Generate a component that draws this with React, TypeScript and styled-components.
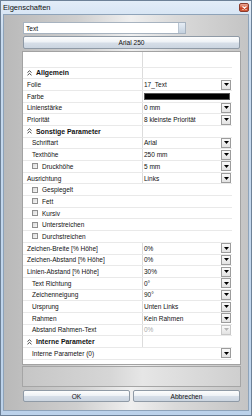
import styled, { createGlobalStyle } from "styled-components";

const Global = createGlobalStyle`
  html, body {
    margin: 0;
    padding: 0;
    background: #fff;
  }
  body {
    font-family: "Liberation Sans", Arial, sans-serif;
    color: #111;
  }
`;

const Window = styled.div`
  width: 252px;
  height: 416px;
  box-sizing: border-box;
  border: 1px solid #6d8197;
  background: linear-gradient(180deg, #e3edf8 0%, #c7daee 8%, #bcd2ea 100%);
  display: flex;
  flex-direction: column;
`;

const TitleBar = styled.div`
  height: 13px;
  display: flex;
  align-items: center;
  justify-content: space-between;
  padding: 0 2px 0 2px;
  font-size: 7.5px;
`;

const CloseButton = styled.div`
  width: 10px;
  height: 9px;
  box-sizing: border-box;
  border: 1px solid #8b3b2c;
  border-radius: 2px;
  background: linear-gradient(180deg, #eaa895 0%, #d9694d 45%, #c43e1e 55%, #d4603f 100%);
  display: flex;
  align-items: center;
  justify-content: center;
`;

const Client = styled.div`
  flex: 1;
  margin: 0 2px 4px;
  border: 1px solid #8ea3b9;
  background: linear-gradient(90deg, #b9b9b9 0%, #cfcfcf 30%, #efefef 52%, #dadada 70%, #c4c4c4 100%);
  padding: 7px 6px 0 18px;
  display: flex;
  flex-direction: column;
`;

const Combo = styled.div`
  width: 163px;
  height: 12px;
  margin-left: 1px;
  box-sizing: border-box;
  border: 1px solid #a7b3c0;
  background: #fff;
  display: flex;
  align-items: center;
  justify-content: space-between;
  font-size: 6.6px;
  padding-left: 2px;
`;

const ComboArrow = styled.div`
  width: 6px;
  height: 10px;
  background: linear-gradient(180deg, #e6edf5, #c4d1df);
  border-left: 1px solid #b8c4d1;
`;

const PushButton = styled.div<{ $width: number }>`
  width: ${(p) => p.$width}px;
  height: 12px;
  box-sizing: border-box;
  border: 1px solid #8f9aa6;
  border-radius: 2px;
  background: linear-gradient(180deg, #fdfdfd 0%, #eef2f6 45%, #d6dee8 55%, #cbd5e0 100%);
  font-size: 6.6px;
  display: flex;
  align-items: center;
  justify-content: center;
`;

const WideButton = styled(PushButton)`
  margin: 2px 0 0 1px;
  height: 13px;
`;

const Grid = styled.div`
  margin-top: 2px;
  width: 219px;
  height: 314px;
  box-sizing: border-box;
  border: 1px solid #a2a2a2;
  background: #fff;
  overflow: hidden;
  display: flex;
  flex-direction: column;
`;

const Row = styled.div<{ $first?: boolean }>`
  height: ${(p) => (p.$first ? 15.5 : 11.7)}px;
  flex: none;
  width: 209px;
  box-sizing: border-box;
  border-bottom: 1px solid #e9e9e9;
  display: flex;
  font-size: 6.5px;
`;

const NameCell = styled.div<{ $indent: number }>`
  width: 120px;
  box-sizing: border-box;
  border-right: 1px solid #dcdcdc;
  padding-left: ${(p) => p.$indent}px;
  display: flex;
  align-items: center;
  gap: 4px;
  white-space: nowrap;
`;

const FullCell = styled.div<{ $indent: number }>`
  flex: 1;
  padding-left: ${(p) => p.$indent}px;
  display: flex;
  align-items: center;
  gap: 4px;
  white-space: nowrap;
`;

const ValueCell = styled.div<{ $disabled?: boolean }>`
  flex: 1;
  padding-left: 1px;
  display: flex;
  align-items: center;
  justify-content: space-between;
  color: ${(p) => (p.$disabled ? "#a8a8a8" : "inherit")};
`;

const CategoryLabel = styled.span`
  font-weight: bold;
  font-size: 6.9px;
`;

const Drop = styled.div<{ $disabled?: boolean }>`
  width: 10px;
  height: 10px;
  margin-right: 1px;
  box-sizing: border-box;
  border: 1px solid ${(p) => (p.$disabled ? "#c8c8c8" : "#9c9c9c")};
  background: linear-gradient(180deg, #fafafa, #e2e2e2);
  display: flex;
  align-items: center;
  justify-content: center;
`;

const CheckBox = styled.span`
  width: 6px;
  height: 6px;
  box-sizing: border-box;
  border: 1px solid #8f8f8f;
  background: linear-gradient(135deg, #d9d9d9, #f7f7f7);
  flex: none;
`;

const Swatch = styled.div`
  width: 86px;
  height: 7px;
  box-sizing: border-box;
  border: 1px solid #555;
  background: #000;
`;

const Description = styled.div`
  margin-top: 1px;
  width: 219px;
  height: 21px;
  box-sizing: border-box;
  border: 1px solid #a5a5a5;
  background: linear-gradient(90deg, #c6c6c6 0%, #d6d6d6 40%, #e6e6e6 55%, #cfcfcf 100%);
`;

const ButtonRow = styled.div`
  margin: 3px 0 0 1px;
  display: flex;
  gap: 3px;
`;

type Item =
  | { kind: "cat"; label: string; indent: number }
  | { kind: "prop"; label: string; value?: string; indent: number; check?: boolean; drop?: boolean; disabled?: boolean; swatch?: boolean }
  | { kind: "check"; label: string }
  | { kind: "full"; label: string; indent: number };

const items: Item[] = [
  { kind: "cat", label: "Allgemein", indent: 4 },
  { kind: "prop", label: "Folie", value: "17_Text", indent: 4, drop: true },
  { kind: "prop", label: "Farbe", indent: 4, swatch: true },
  { kind: "prop", label: "Linienstärke", value: "0 mm", indent: 4, drop: true },
  { kind: "prop", label: "Priorität", value: "8 kleinste Priorität", indent: 4, drop: true },
  { kind: "cat", label: "Sonstige Parameter", indent: 4 },
  { kind: "prop", label: "Schriftart", value: "Arial", indent: 9, drop: true },
  { kind: "prop", label: "Texthöhe", value: "250 mm", indent: 9, drop: true },
  { kind: "prop", label: "Druckhöhe", value: "5 mm", indent: 9, drop: true, check: true },
  { kind: "prop", label: "Ausrichtung", value: "Links", indent: 4, drop: true },
  { kind: "check", label: "Gespiegelt" },
  { kind: "check", label: "Fett" },
  { kind: "check", label: "Kursiv" },
  { kind: "check", label: "Unterstreichen" },
  { kind: "check", label: "Durchstreichen" },
  { kind: "prop", label: "Zeichen-Breite [% Höhe]", value: "0%", indent: 4, drop: true },
  { kind: "prop", label: "Zeichen-Abstand [% Höhe]", value: "0%", indent: 4, drop: true },
  { kind: "prop", label: "Linien-Abstand [% Höhe]", value: "30%", indent: 4, drop: true },
  { kind: "prop", label: "Text Richtung", value: "0°", indent: 9, drop: true },
  { kind: "prop", label: "Zeichenneigung", value: "90°", indent: 9, drop: true },
  { kind: "prop", label: "Ursprung", value: "Unten Links", indent: 9, drop: true },
  { kind: "prop", label: "Rahmen", value: "Kein Rahmen", indent: 9, drop: true },
  { kind: "prop", label: "Abstand Rahmen-Text", value: "0%", indent: 9, drop: true, disabled: true },
  { kind: "cat", label: "Interne Parameter", indent: 4 },
  { kind: "full", label: "Interne Parameter (0)", indent: 9 },
];

function Arrow({ color = "#000" }: { color?: string }) {
  return (
    <svg width="5" height="3" viewBox="0 0 5 3">
      <path d="M0 0h5L2.5 3z" fill={color} />
    </svg>
  );
}

function Collapse() {
  return (
    <svg width="5" height="6" viewBox="0 0 5 6">
      <path d="M0.5 2.5L2.5 0.8 4.5 2.5M0.5 5.2L2.5 3.5 4.5 5.2" fill="none" stroke="#333" strokeWidth="0.9" />
    </svg>
  );
}

function GridRow({ item }: { item: Item }) {
  if (item.kind === "cat") {
    return (
      <Row>
        <NameCell $indent={item.indent}>
          <Collapse />
          <CategoryLabel>{item.label}</CategoryLabel>
        </NameCell>
        <ValueCell />
      </Row>
    );
  }
  if (item.kind === "check") {
    return (
      <Row>
        <FullCell $indent={9}>
          <CheckBox />
          {item.label}
        </FullCell>
      </Row>
    );
  }
  if (item.kind === "full") {
    return (
      <Row>
        <FullCell $indent={item.indent} style={{ justifyContent: "space-between" }}>
          {item.label}
          <Drop>
            <Arrow />
          </Drop>
        </FullCell>
      </Row>
    );
  }
  return (
    <Row>
      <NameCell $indent={item.indent}>
        {item.check && <CheckBox />}
        {item.label}
      </NameCell>
      <ValueCell $disabled={item.disabled}>
        {item.swatch ? <Swatch /> : <span>{item.value}</span>}
        {item.drop && (
          <Drop $disabled={item.disabled}>
            <Arrow color={item.disabled ? "#b5b5b5" : "#000"} />
          </Drop>
        )}
      </ValueCell>
    </Row>
  );
}

export default function App() {
  return (
    <>
      <Global />
      <Window>
        <TitleBar>
          <span>Eigenschaften</span>
          <CloseButton>
            <svg width="5" height="4" viewBox="0 0 5 4">
              <path d="M0.5 0.5L4.5 3.5M4.5 0.5L0.5 3.5" stroke="#fff" strokeWidth="1.1" />
            </svg>
          </CloseButton>
        </TitleBar>
        <Client>
          <Combo>
            Text
            <ComboArrow />
          </Combo>
          <WideButton $width={217}>Arial 250</WideButton>
          <Grid>
            <Row $first>
              <NameCell $indent={0} />
              <ValueCell />
            </Row>
            {items.map((item, i) => (
              <GridRow key={i} item={item} />
            ))}
          </Grid>
          <Description />
          <ButtonRow>
            <PushButton $width={107}>OK</PushButton>
            <PushButton $width={107}>Abbrechen</PushButton>
          </ButtonRow>
        </Client>
      </Window>
    </>
  );
}
